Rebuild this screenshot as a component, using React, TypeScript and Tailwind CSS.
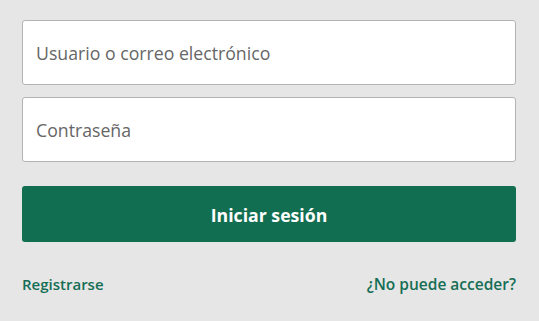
export default function App() {
  return (
    <div className="min-h-[321px] w-full bg-[#e6e6e6] px-[22px] pt-[20px] font-['Open_Sans',sans-serif]">
      <div className="w-[494px]">
        <input
          type="text"
          placeholder="Usuario o correo electrónico"
          className="block h-[65px] w-full rounded-[3px] border border-[#b3b3b3] bg-white px-[13px] text-[17.7px] text-[#333] placeholder:text-[#666] outline-none"
        />
        <input
          type="password"
          placeholder="Contraseña"
          className="mt-[12px] block h-[65px] w-full rounded-[3px] border border-[#b3b3b3] bg-white px-[13px] text-[17.7px] text-[#333] placeholder:text-[#666] outline-none"
        />
        <button className="mt-[24px] flex h-[56px] w-full items-center justify-center rounded-[3px] bg-[#126e51] pt-[2px] text-[17.7px] font-bold text-white">
          Iniciar sesión
        </button>
        <div className="mt-[31px] flex items-center justify-between text-[15px] font-semibold text-[#156e55]">
          <a href="#">Registrarse</a>
          <a href="#" className="text-[15.5px]">¿No puede acceder?</a>
        </div>
      </div>
    </div>
  );
}
